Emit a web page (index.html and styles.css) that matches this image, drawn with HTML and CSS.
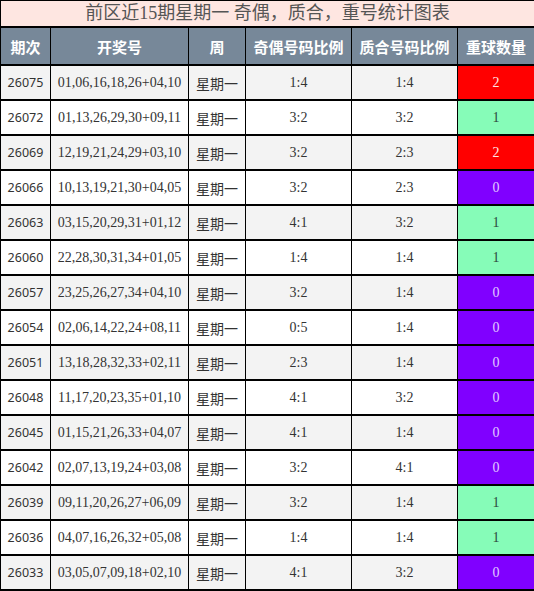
FILE: index.html
```html
<!DOCTYPE html>
<html lang="zh">
<head>
    <meta charset="UTF-8">
    <meta name="viewport" content="width=device-width, initial-scale=1.0">
    <title>前区近15期星期一 奇偶，质合，重号统计图表</title>
    <link rel="stylesheet" href="styles.css">
</head>
<body>

<table class="stats">
    <colgroup>
        <col class="c-issue">
        <col class="c-nums">
        <col class="c-week">
        <col class="c-odd">
        <col class="c-prime">
        <col class="c-rep">
    </colgroup>
    <tr>
        <td class="title" colspan="6">前区近15期星期一 奇偶，质合，重号统计图表</td>
    </tr>
    <tr class="head">
        <th>期次</th>
        <th>开奖号</th>
        <th>周</th>
        <th>奇偶号码比例</th>
        <th>质合号码比例</th>
        <th>重球数量</th>
    </tr>
    <tr class="row"><td class="issue">26075</td><td class="num">01,06,16,18,26+04,10</td><td class="week">星期一</td><td class="num">1:4</td><td class="num">1:4</td><td class="rep rep-2">2</td></tr>
    <tr class="row"><td class="issue">26072</td><td class="num">01,13,26,29,30+09,11</td><td class="week">星期一</td><td class="num">3:2</td><td class="num">3:2</td><td class="rep rep-1">1</td></tr>
    <tr class="row"><td class="issue">26069</td><td class="num">12,19,21,24,29+03,10</td><td class="week">星期一</td><td class="num">3:2</td><td class="num">2:3</td><td class="rep rep-2">2</td></tr>
    <tr class="row"><td class="issue">26066</td><td class="num">10,13,19,21,30+04,05</td><td class="week">星期一</td><td class="num">3:2</td><td class="num">2:3</td><td class="rep rep-0">0</td></tr>
    <tr class="row"><td class="issue">26063</td><td class="num">03,15,20,29,31+01,12</td><td class="week">星期一</td><td class="num">4:1</td><td class="num">3:2</td><td class="rep rep-1">1</td></tr>
    <tr class="row"><td class="issue">26060</td><td class="num">22,28,30,31,34+01,05</td><td class="week">星期一</td><td class="num">1:4</td><td class="num">1:4</td><td class="rep rep-1">1</td></tr>
    <tr class="row"><td class="issue">26057</td><td class="num">23,25,26,27,34+04,10</td><td class="week">星期一</td><td class="num">3:2</td><td class="num">1:4</td><td class="rep rep-0">0</td></tr>
    <tr class="row"><td class="issue">26054</td><td class="num">02,06,14,22,24+08,11</td><td class="week">星期一</td><td class="num">0:5</td><td class="num">1:4</td><td class="rep rep-0">0</td></tr>
    <tr class="row"><td class="issue">26051</td><td class="num">13,18,28,32,33+02,11</td><td class="week">星期一</td><td class="num">2:3</td><td class="num">1:4</td><td class="rep rep-0">0</td></tr>
    <tr class="row"><td class="issue">26048</td><td class="num">11,17,20,23,35+01,10</td><td class="week">星期一</td><td class="num">4:1</td><td class="num">3:2</td><td class="rep rep-0">0</td></tr>
    <tr class="row"><td class="issue">26045</td><td class="num">01,15,21,26,33+04,07</td><td class="week">星期一</td><td class="num">4:1</td><td class="num">1:4</td><td class="rep rep-0">0</td></tr>
    <tr class="row"><td class="issue">26042</td><td class="num">02,07,13,19,24+03,08</td><td class="week">星期一</td><td class="num">3:2</td><td class="num">4:1</td><td class="rep rep-0">0</td></tr>
    <tr class="row"><td class="issue">26039</td><td class="num">09,11,20,26,27+06,09</td><td class="week">星期一</td><td class="num">3:2</td><td class="num">1:4</td><td class="rep rep-1">1</td></tr>
    <tr class="row"><td class="issue">26036</td><td class="num">04,07,16,26,32+05,08</td><td class="week">星期一</td><td class="num">1:4</td><td class="num">1:4</td><td class="rep rep-1">1</td></tr>
    <tr class="row"><td class="issue">26033</td><td class="num">03,05,07,09,18+02,10</td><td class="week">星期一</td><td class="num">4:1</td><td class="num">3:2</td><td class="rep rep-0">0</td></tr>
</table>

</body>
</html>
```

FILE: styles.css
```css
body {
    margin: 0;
    padding: 0;
    background: #fff;
}

.stats {
    width: 534px;
    border-collapse: collapse;
    table-layout: fixed;
    border: 1px solid #000;
}

.stats td,
.stats th {
    padding: 0;
    text-align: center;
    white-space: nowrap;
    border-right: 1px solid #000;
    border-bottom: 2px solid #000;
}

/* column widths, measured off the screenshot */
.c-issue { width: 50px; }
.c-nums  { width: 138px; }
.c-week  { width: 57px; }
.c-odd   { width: 106px; }
.c-prime { width: 106px; }
.c-rep   { width: 77px; }

.title {
    height: 25px;
    background: #fee6e1;
    color: #555;
    font-family: "Liberation Serif", "Noto Sans CJK SC", serif;
    font-size: 18px;
    line-height: 25px;
}

.head th {
    height: 36px;
    background: #778899;
    color: #fff;
    font-family: "Noto Sans CJK SC", sans-serif;
    font-size: 15px;
    font-weight: bold;
}

.row td {
    height: 33px;
    color: #333;
    font-size: 14px;
}

.row:nth-child(odd) td {
    background: #f3f3f3;
}

.row:nth-child(even) td {
    background: #fff;
}

.row td.issue {
    font-family: "Noto Sans", sans-serif;
    font-size: 12.5px;
}

.num {
    font-family: "Liberation Serif", serif;
}

.week {
    font-family: "Noto Sans CJK SC", sans-serif;
}

.rep {
    font-family: "Liberation Serif", serif;
}

.row td.rep-2 {
    background: #ff0000;
    color: #ffe6e6;
}

.row td.rep-1 {
    background: #86fcb8;
    color: #2e4a3c;
}

.row td.rep-0 {
    background: #8000ff;
    color: #e0ccff;
}
```
